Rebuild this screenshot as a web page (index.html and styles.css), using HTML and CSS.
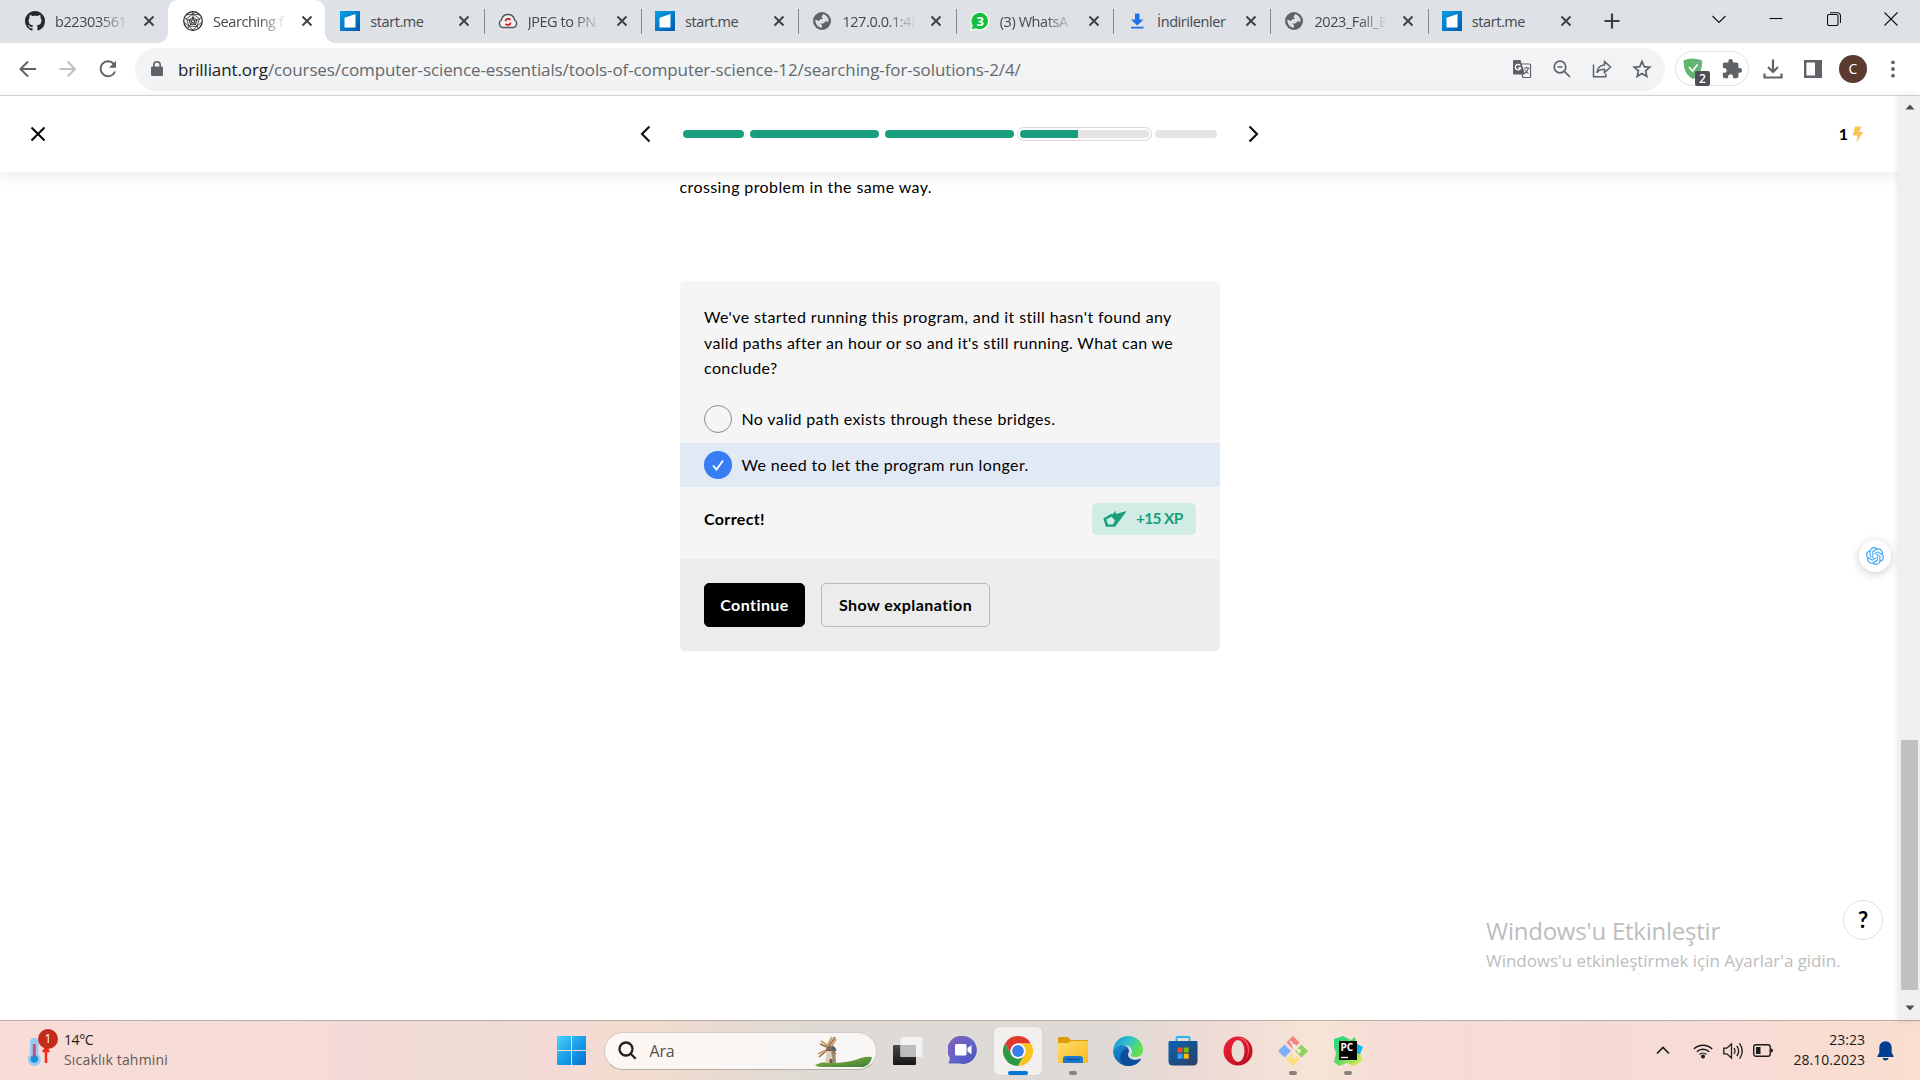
FILE: index.html
```html
<!DOCTYPE html>
<html lang="tr">
<head>
<meta charset="utf-8">
<title>Searching for Solutions</title>
<link rel="stylesheet" href="styles.css">
</head>
<body>
<svg width="0" height="0" class="defs">
  <defs>
    <linearGradient id="gStart" x1="0" y1="0" x2="1" y2="1"><stop offset="0" stop-color="#05a0e4"/><stop offset="1" stop-color="#0257ae"/></linearGradient>
    <linearGradient id="gWin" x1="0" y1="0" x2="1" y2="1"><stop offset="0" stop-color="#4ad2fb"/><stop offset=".5" stop-color="#1c9ee8"/><stop offset="1" stop-color="#0571d0"/></linearGradient>
    <linearGradient id="gHill" x1="0" y1="0" x2="1" y2="1"><stop offset="0" stop-color="#8ab83c"/><stop offset="1" stop-color="#3f7d3a"/></linearGradient>
    <linearGradient id="gDark" x1="0" y1="0" x2="0" y2="1"><stop offset="0" stop-color="#4b4a48"/><stop offset="1" stop-color="#161616"/></linearGradient>
    <linearGradient id="gChat" x1="0" y1="0" x2="1" y2="1"><stop offset="0" stop-color="#8a5fb0"/><stop offset=".5" stop-color="#6264c9"/><stop offset="1" stop-color="#4b53bc"/></linearGradient>
    <linearGradient id="gFold" x1="0" y1="0" x2="1" y2="1"><stop offset="0" stop-color="#ffdc6a"/><stop offset="1" stop-color="#f8b91f"/></linearGradient>
    <linearGradient id="gEdgeTop" x1="0" y1="0" x2="1" y2=".4"><stop offset="0" stop-color="#1f8fd0"/><stop offset=".5" stop-color="#2dbfd0"/><stop offset="1" stop-color="#63e04c"/></linearGradient>
    <linearGradient id="gEdge" x1="0" y1="0" x2="1" y2="1"><stop offset="0" stop-color="#1c8fdc"/><stop offset="1" stop-color="#0c4a92"/></linearGradient>
    <linearGradient id="gStore" x1="0" y1="0" x2="1" y2="1"><stop offset="0" stop-color="#0b62b4"/><stop offset="1" stop-color="#2b3d63"/></linearGradient>
    <linearGradient id="gOpera" x1="0" y1="0" x2="1" y2="1"><stop offset="0" stop-color="#f0243a"/><stop offset="1" stop-color="#b50a20"/></linearGradient>
    <linearGradient id="gPy" x1="0" y1="0" x2="1" y2="1"><stop offset="0" stop-color="#1fd789"/><stop offset=".5" stop-color="#62d860"/><stop offset="1" stop-color="#f4f04a"/></linearGradient>
    <symbol id="close" viewBox="0 0 12 12"><path d="M1.500 1.500 10.500 10.500M10.500 1.500 1.500 10.500" stroke="#3c4043" stroke-width="1.900" fill="none"/></symbol>
    <symbol id="startme" viewBox="0 0 20 20"><path d="M0 0h20v20H0z" fill="url(#gStart)"/><path d="M4.500 6.800 15.500 3v13.500h-11z" fill="#fff"/></symbol>
    <symbol id="globe" viewBox="0 0 20 20"><circle cx="10" cy="10" r="9" fill="#5f6368"/><path d="M11 3.200 9.500 6 11 8H8.500L7 10 3.300 8.400C3.200 13 6 16.400 9.800 16.800l.2-2.300-1.500-2h4l.8-2.300 3.200.6C17.300 7.500 14.500 3.800 11 3.200z" fill="#dee1e6"/><path d="m11.500 12 2.500-1 1 2-2.500 2.500z" fill="#5f6368"/></symbol>
  </defs>
</svg>
<div class="screen">
  <div class="tabs">
    <div class="tab first"><svg class="fav" viewBox="0 0 16 16"><path fill="#24292f" d="M8 0C3.580 0 0 3.580 0 8c0 3.540 2.290 6.530 5.470 7.590.4.070.55-.17.55-.38 0-.19-.01-.82-.01-1.490-2.010.37-2.530-.49-2.690-.94-.09-.23-.48-.94-.82-1.130-.28-.15-.68-.52-.01-.53.63-.01 1.080.58 1.230.82.72 1.210 1.870.87 2.330.66.07-.52.28-.87.51-1.070-1.780-.2-3.640-.89-3.640-3.950 0-.87.31-1.590.82-2.150-.08-.2-.36-1.020.08-2.120 0 0 .67-.21 2.200.82.64-.18 1.320-.27 2-.27s1.360.09 2 .27c1.530-1.040 2.200-.82 2.200-.82.44 1.100.16 1.920.08 2.120.51.56.82 1.270.82 2.150 0 3.070-1.870 3.750-3.650 3.950.29.25.54.73.54 1.480 0 1.070-.01 1.930-.01 2.200 0 .21.15.46.55.38A8.010 8.010 0 0 0 16 8c0-4.420-3.580-8-8-8z"/></svg><span class="title fade">b22303561</span><svg class="x"><use href="#close"/></svg></div>
    <div class="tab active"><svg class="fav" viewBox="0 0 20 20" fill="none" stroke="#222" stroke-width=".8"><circle cx="10" cy="10" r="9.300" stroke-width="1.200"/><path d="m10 3 6.500 4.700-2.500 7.600H6L3.500 7.700zM10 3V.8m6.500 6.900 2.300-.8M14 15.300l1.500 2M6 15.300l-1.500 2M3.500 7.700l-2.300-.8M10 6l4 3-1.500 4.500h-5L6 9zM10 3v3m6.500 1.700L14 9m0 6.300-1.500-1.800M6 15.300l1.500-1.800M3.500 7.700 6 9M6 9l8 0-6.500 4.500L10 6l2.500 7.500zM3 4l7-1 7 1M1 11l5 4.300 4 3.900 4-3.900 5-4.300"/></svg><span class="title fade">Searching f</span><svg class="x"><use href="#close"/></svg></div>
    <div class="tab"><svg class="fav"><use href="#startme"/></svg><span class="title">start.me</span><svg class="x"><use href="#close"/></svg></div>
    <div class="tab sep"><svg class="fav" viewBox="0 0 20 20"><path d="M4.500 16.500A4.200 4.200 0 0 1 3.500 8.800C4.200 5.200 7 3.500 10 3.500s5.800 1.700 6.500 5.300a4.200 4.200 0 0 1-1 7.700z" fill="#f2f2f2" stroke="#555" stroke-width="1.400"/><path d="M7.500 10.300A2.700 2.700 0 0 1 12.400 9m.2 2.500a2.700 2.700 0 0 1-5 1.200" stroke="#d8232a" stroke-width="1.900" fill="none"/></svg><span class="title fade">JPEG to PN</span><svg class="x"><use href="#close"/></svg></div>
    <div class="tab sep"><svg class="fav"><use href="#startme"/></svg><span class="title">start.me</span><svg class="x"><use href="#close"/></svg></div>
    <div class="tab sep"><svg class="fav"><use href="#globe"/></svg><span class="title fade">127.0.0.1:48</span><svg class="x"><use href="#close"/></svg></div>
    <div class="tab sep"><svg class="fav" viewBox="0 0 20 20"><path d="M0 20 1.400 14.500A9.500 9.500 0 1 1 5.600 18.600z" fill="#f5fff5"/><path d="m1.800 18.200 1-3.800a8.200 8.200 0 1 1 3 2.800z" fill="#12bf3c"/><text x="10" y="14.800" font-size="13" font-weight="700" text-anchor="middle" fill="#fff" class="ui">3</text></svg><span class="title fade">(3) WhatsA</span><svg class="x"><use href="#close"/></svg></div>
    <div class="tab sep"><svg class="fav" viewBox="0 0 20 20"><path d="M8 2.500h4.500v6h4L10.200 14.500 4 8.500h4zM4 15.800h12.500v1.700H4z" fill="#1a73e8"/></svg><span class="title">İndirilenler</span><svg class="x"><use href="#close"/></svg></div>
    <div class="tab sep"><svg class="fav"><use href="#globe"/></svg><span class="title fade">2023_Fall_E</span><svg class="x"><use href="#close"/></svg></div>
    <div class="tab sep"><svg class="fav"><use href="#startme"/></svg><span class="title">start.me</span><svg class="x"><use href="#close"/></svg></div>
    <div class="newtab"><svg width="16" height="16" viewBox="0 0 16 16"><path d="M8 .5v15M.5 8h15" stroke="#3c4043" stroke-width="2.200"/></svg></div>
    <div class="winctl">
      <svg width="14" height="14" viewBox="0 0 14 14"><path d="m.5 4 6.500 6.500L13.500 4"/></svg>
      <svg width="14" height="14" viewBox="0 0 14 14"><path d="M.5 6.500h13"/></svg>
      <svg width="14" height="14" viewBox="0 0 14 14"><rect x=".5" y="2.500" width="10.500" height="11" rx="1.500"/><path d="M3 .8h7.500a3 3 0 0 1 3 3V11"/></svg>
      <svg width="14" height="14" viewBox="0 0 14 14"><path d="m.5.500 13 13M13.500.500l-13 13"/></svg>
    </div>
  </div>

  <div class="toolbar">
    <div class="nav">
      <svg width="20" height="20" viewBox="0 0 20 20" stroke="#5f6368"><path d="M18 10H3M10 2.500 2.500 10l7.500 7.500"/></svg>
      <svg width="20" height="20" viewBox="0 0 20 20" stroke="#bdc1c6"><path d="M1.500 10H16.500M9.500 2.500l7.500 7.500-7.500 7.500"/></svg>
      <svg width="20" height="20" viewBox="0 0 20 20" stroke="#5f6368"><path d="M15.800 5A7.500 7.500 0 1 0 17 12.500"/><path d="M18 1.800v7h-7z" fill="#5f6368" stroke="none"/></svg>
    </div>
    <div class="omnibox">
      <svg width="12" height="16" viewBox="0 0 12 16"><rect y="5.500" width="12" height="9.500" rx="1.300" fill="#5f6368"/><path d="M2.800 6V4a3.200 3.200 0 0 1 6.400 0v2" fill="none" stroke="#5f6368" stroke-width="1.600"/></svg>
      <span class="url"><b>brilliant.org</b>/courses/computer-science-essentials/tools-of-computer-science-12/searching-for-solutions-2/4/</span>
      <div class="acts">
        <svg width="20" height="20" viewBox="0 0 20 20"><path d="M7 5h10.500q1 0 1 1v11.500q0 1-1 1H11z" fill="#fff" stroke="#5f6368" stroke-width="1.200"/><path d="M2 1h6.500l4.500 14.500H2q-1 0-1-1V2q0-1 1-1z" fill="#5f6368"/><path d="M8.200 6.500a2.700 2.700 0 1 0 .4 2.500H6.300" fill="none" stroke="#fff" stroke-width="1.300"/><path d="M11.500 9h6M14.500 7.500V9m2 0q-1 3.500-4 5.500M12.500 10.500l4 4.500" fill="none" stroke="#5f6368" stroke-width="1.100"/></svg>
        <svg width="20" height="20" viewBox="0 0 20 20" fill="none" stroke="#5f6368" stroke-width="1.700"><circle cx="8" cy="8" r="5.800"/><path d="m12.300 12.300 5.700 5.700M5.500 8h5"/></svg>
        <svg width="20" height="20" viewBox="0 0 20 20" fill="none" stroke="#5f6368" stroke-width="1.500"><path d="M1.500 5.500v12.300h12.300v-3M12.500 2.500l6 5.500-6 5.500v-3.200c-3.500 0-6 .8-7.500 3.500.3-4.800 3-7.500 7.500-7.800z"/></svg>
        <svg width="20" height="20" viewBox="0 0 20 20" fill="none" stroke="#5f6368" stroke-width="1.700"><path d="m10 2.500 2.200 5.200 5.600.5-4.200 3.700 1.200 5.500L10 14.500l-4.800 2.900 1.200-5.500-4.200-3.700 5.600-.5z"/></svg>
      </div>
    </div>
    <div class="pill">
      <div class="shield"><svg width="20" height="22" viewBox="0 0 20 22"><path d="M10 .8c3 0 6.500.6 9.200 1.800 0 8-1.700 14-9.200 18.400C2.500 16.600.8 10.600.8 2.600 3.500 1.400 7 .8 10 .8z" fill="#67b279"/><path d="M10 .8v20.200C2.500 16.600.8 10.600.8 2.600 3.500 1.400 7 .8 10 .8z" fill="#5fb56c"/><path d="m6 9 3.500 4L14.500 6.500" fill="none" stroke="#fff" stroke-width="1.700"/></svg><span class="count">2</span></div>
      <svg width="22" height="22" viewBox="0 0 24 24"><path fill="#5f6368" d="M20.500 11H19V7c0-1.100-.9-2-2-2h-4V3.500a2.500 2.500 0 0 0-5 0V5H4c-1.100 0-1.990.9-1.990 2v3.800H3.500c1.490 0 2.700 1.210 2.700 2.700s-1.210 2.700-2.700 2.700H2V20c0 1.100.9 2 2 2h3.800v-1.500c0-1.490 1.210-2.700 2.700-2.700s2.700 1.210 2.700 2.700V22H17c1.100 0 2-.9 2-2v-4h1.500a2.500 2.500 0 0 0 0-5z"/></svg>
    </div>
    <div class="right">
      <div><svg width="20" height="20" viewBox="0 0 20 20" fill="none" stroke="#5f6368" stroke-width="2.200"><path d="M10 .5V13M5 8l5 5 5-5M1.500 14.500v4h17v-4"/></svg></div>
      <div><svg width="18" height="18" viewBox="0 0 18 18"><path d="M1.200 1.200h15.600v15.600H1.200z" fill="none" stroke="#5f6368" stroke-width="2.400"/><path d="M11 1h6v16h-6z" fill="#5f6368"/></svg></div>
      <div><span class="avatar">C</span></div>
      <div><svg width="4" height="18" viewBox="0 0 4 18" fill="#5f6368"><circle cx="2" cy="2.300" r="1.900"/><circle cx="2" cy="9" r="1.900"/><circle cx="2" cy="15.700" r="1.900"/></svg></div>
    </div>
  </div>

  <div class="viewport">
    <main class="page">
      <header class="lesson">
        <svg width="16" height="16" viewBox="0 0 16 16"><path d="m1.500 1.500 13 13M14.500 1.500l-13 13" stroke="#000" stroke-width="2"/></svg>
        <div class="progress">
          <svg width="11" height="18" viewBox="0 0 11 18"><path d="M9.500 1.500 2 9l7.500 7.500" fill="none" stroke="#111" stroke-width="2.200"/></svg>
          <div class="segs">
            <i class="seg short done"></i><i class="seg done"></i><i class="seg done"></i><i class="seg current"><i class="part"></i></i><i class="seg last"></i>
          </div>
          <svg width="11" height="18" viewBox="0 0 11 18"><path d="M1.500 1.500 9 9l-7.500 7.500" fill="none" stroke="#111" stroke-width="2.200"/></svg>
        </div>
        <div class="streak"><span>1</span><svg width="12" height="17" viewBox="0 0 12 17"><path d="M3 .5h6L7.500 6H11.500L4.500 16.500 5.500 9.500H.8z" fill="#f9c45c"/></svg></div>
      </header>
      <article class="content">
        <p class="body">crossing problem in the same way.</p>
        <section class="card">
          <p class="question">We've started running this program, and it still hasn't found any<br><span class="tight">valid paths after an hour or so and it's still running. What can we</span><br>conclude?</p>
          <div class="option"><span class="radio"></span><span class="label">No valid path exists through these bridges.</span></div>
          <div class="option chosen"><span class="radio"><svg width="14" height="14" viewBox="0 0 14 14"><path d="m2 7.500 3.500 4L12 2.500" fill="none" stroke="#fff" stroke-width="1.800"/></svg></span><span class="label">We need to let the program run longer.</span></div>
          <div class="result"><strong>Correct!</strong>
            <span class="xp"><svg width="24" height="18" viewBox="0 0 24 18"><path fill="#189e7c" fill-rule="evenodd" d="M.3 8.500 8.500 3.500 8.800 5 12.500.7 13 4 23.700 1 12 16.800l-9 0zM3.200 9.500 5 14.500h5l2-4-3.500-3.700z"/></svg><b>+15 XP</b></span></div>
          <div class="actions"><button class="btn primary">Continue</button><button class="btn">Show explanation</button></div>
        </section>
      </article>
      <div class="gpt"><svg width="18" height="18" viewBox="0 0 24 24"><path fill="#3fa9f5" d="M22.282 9.821a5.985 5.985 0 0 0-.516-4.910 6.046 6.046 0 0 0-6.510-2.900A6.065 6.065 0 0 0 4.981 4.182a5.985 5.985 0 0 0-3.998 2.900 6.046 6.046 0 0 0 .743 7.097 5.980 5.980 0 0 0 .510 4.911 6.051 6.051 0 0 0 6.515 2.900A5.985 5.985 0 0 0 13.260 24a6.056 6.056 0 0 0 5.772-4.206 5.990 5.990 0 0 0 3.998-2.900 6.056 6.056 0 0 0-.748-7.073zM13.260 22.430a4.476 4.476 0 0 1-2.876-1.041l.142-.080 4.778-2.758a.795.795 0 0 0 .393-.681v-6.737l2.020 1.169a.071.071 0 0 1 .038.052v5.583a4.504 4.504 0 0 1-4.495 4.493zM3.600 18.304a4.471 4.471 0 0 1-.535-3.014l.142.085 4.783 2.759a.771.771 0 0 0 .780 0l5.843-3.369v2.332a.080.080 0 0 1-.033.062L9.740 19.950a4.500 4.500 0 0 1-6.140-1.646zM2.341 7.896a4.485 4.485 0 0 1 2.365-1.973V11.600a.766.766 0 0 0 .388.676l5.815 3.355-2.020 1.168a.076.076 0 0 1-.071 0L3.987 14.010A4.504 4.504 0 0 1 2.341 7.896zm16.596 3.856L13.104 8.364 15.120 7.200a.076.076 0 0 1 .071 0l4.830 2.791a4.494 4.494 0 0 1-.676 8.105v-5.678a.790.790 0 0 0-.408-.666zm2.011-3.023-.142-.085-4.774-2.782a.776.776 0 0 0-.785 0L9.409 9.230V6.897a.066.066 0 0 1 .028-.061l4.830-2.787a4.500 4.500 0 0 1 6.681 4.660zM8.307 12.863l-2.020-1.164a.080.080 0 0 1-.038-.057V6.074a4.500 4.500 0 0 1 7.376-3.453l-.142.080L8.704 5.460a.795.795 0 0 0-.393.681zm1.097-2.366L12.006 9l2.607 1.500v3L12.016 15l-2.607-1.500z"/></svg></div>
      <div class="help">?</div>
      <div class="watermark"><div class="w1">Windows'u Etkinleştir</div><div class="w2">Windows'u etkinleştirmek için Ayarlar'a gidin.</div></div>
    </main>
    <div class="scrollbar"><svg width="10" height="6" viewBox="0 0 10 6"><path d="M5 .5 9.500 5.500h-9z" fill="#505050"/></svg><i class="thumb"></i><svg width="10" height="6" viewBox="0 0 10 6"><path d="M5 5.500.5.500h9z" fill="#505050"/></svg></div>
  </div>

  <footer class="taskbar">
    <div class="weather">
      <div class="thermo"><svg width="22" height="30" viewBox="0 0 22 30"><path d="M2 4.500a4.300 4.300 0 0 1 8.500 0v13a6.500 6.500 0 1 1-8.500 0z" fill="#9acbf3"/><circle cx="6.300" cy="22" r="3.800" fill="#148fdc"/><path d="M6.300 7v13" stroke="#c8517b" stroke-width="3"/><path d="M18 10v16M15 15l3-4 3 4" stroke="#f3281b" stroke-width="2.500" fill="none"/></svg><span class="bubble">1</span></div>
      <div class="wtext"><div class="temp">14°C</div><div class="sub">Sıcaklık tahmini</div></div>
    </div>
    <div class="apps">
      <svg width="29" height="29" viewBox="0 0 29 29" fill="url(#gWin)"><path d="M1 0h13v14H0V1q0-1 1-1zM15 0h13q1 0 1 1v13H15zM0 15h14v14H1q-1 0-1-1zM15 15h14v13q0 1-1 1H15z"/></svg>
      <div class="search">
        <svg width="19" height="19" viewBox="0 0 19 19" fill="none" stroke="#222" stroke-width="2.300"><circle cx="8" cy="8" r="6.500"/><path d="m12.700 12.700 5 5"/></svg>
        <span>Ara</span>
        <svg class="mill" width="58" height="32" viewBox="0 0 58 32"><path d="M0 29q9-5 21-2 16-1 25-5 6-2 11-1-1 7-8 10H6q-4 0-6-2z" fill="url(#gHill)"/><path d="m12 14-2 13h11l-1-13z" fill="#d9cfb8"/><path d="m16 14 4 0 1 13h-3z" fill="#9c8e77"/><path d="M10.500 15q1-5.500 5.500-5.500t5.500 5.500z" fill="#53606a"/><path d="M14.500 23h3v4h-3z" fill="#7b5939"/><path d="m20 1-9 14-7 6M5 8l9 4 7 6" stroke="#9a6b43" stroke-width="1.500" fill="none"/><path d="m17 1-4 8M21 3l-5 8M6 5l7 5M3 18l8-4" stroke="#c99a68" stroke-width="1.800"/></svg>
      </div>
      <div class="app"><svg width="30" height="28" viewBox="0 0 30 28"><rect y="8" width="23" height="20" rx="1" fill="url(#gDark)"/><rect x="7.500" width="22" height="20" rx="1" fill="#f4f4f4" opacity=".92"/><path d="M7.500 8H23v12H8.500q-1 0-1-1z" fill="#bdbdbb"/></svg></div>
      <div class="app"><svg width="30" height="29" viewBox="0 0 30 29"><path d="M15 0a14 14 0 1 1-3.500 27.600H1.500q-1.300 0-.7-1.200L2 22A14 14 0 0 1 15 0z" fill="url(#gChat)"/><rect x="7" y="8" width="11.500" height="11.500" rx="1.500" fill="#fff"/><path d="m19.500 12 4-2.700v9l-4-2.700z" fill="#fff"/></svg></div>
      <div class="app on"><svg width="30" height="30" viewBox="0 0 30 30"><circle cx="15" cy="15" r="15" fill="#fff"/><path d="M2 7.500A15 15 0 0 1 28 7.500H15A7.500 7.500 0 0 0 8.500 18.700z" fill="#e0382d"/><path d="M2 7.500 8.500 18.750A7.500 7.500 0 0 0 21.500 18.750L15 30A15 15 0 0 1 2 7.500z" fill="#2c9947"/><path d="M28 7.500H15a7.500 7.500 0 0 1 6.500 11.250L15 30A15 15 0 0 0 28 7.500z" fill="#fcc31e"/><circle cx="15" cy="15" r="7.500" fill="#fff"/><circle cx="15" cy="15" r="5.900" fill="#3b7ded"/></svg><i></i></div>
      <div class="app run"><svg width="30" height="27" viewBox="0 0 30 27"><path d="M0 1q0-1 1-1h9l3 3h16q1 0 1 1v6H0z" fill="#dd9c0a"/><path d="M0 6h10l3-2h16q1 0 1 1v20q0 1-1 1H1q-1 0-1-1z" fill="url(#gFold)"/><path d="M5 26v-4q0-3 3-3h14q3 0 3 3v4z" fill="#1d78cd"/><path d="M8.500 22.500h13" stroke="#0b4e93" stroke-width="1.200"/></svg><i></i></div>
      <div class="app"><svg width="30" height="30" viewBox="0 0 30 30"><path d="M0 15a15 15 0 0 0 22 13.200c3-1.500 5.500-4 6-6-6 3.500-14 .5-14-5 0-3 1.500-4.200 1.500-4.200C14 8 3 7 0 15z" fill="url(#gEdge)"/><path d="M10 29c-5-5-3-14 3.500-16.500 2 0 3 2 2.500 3.500-2 2-1.500 9 8 8 1.500-.2 3.500-1.300 4-1C25 29 17 31.500 10 29z" fill="#0d4e9c"/><path d="M0 14.500C1 5 8 0 15 0c9 0 15 6.500 15 13.500 0 5-3.500 7.500-7.500 7.500-3 0-5-1-4.500-2 3-4 0-10-7.500-10C5.500 9 1.500 11 0 14.500z" fill="url(#gEdgeTop)"/></svg></div>
      <div class="app"><svg width="30" height="30" viewBox="0 0 30 30"><path d="M8.500 6V2q0-1 1-1h11q1 0 1 1v4" fill="none" stroke="#25b5f1" stroke-width="1.800"/><path d="M.5 6q0-1 1-1h27q1 0 1 1v19q0 4.500-4.500 4.500H5Q.5 29.500.5 25z" fill="url(#gStore)"/><path d="M9.500 11.500h5v5h-5z" fill="#f25022"/><path d="M15.700 11.500h5v5h-5z" fill="#7fba00"/><path d="M9.500 17.700h5v5h-5z" fill="#2aa6f0"/><path d="M15.700 17.700h5v5h-5z" fill="#ffb900"/></svg></div>
      <div class="app"><svg width="30" height="30" viewBox="0 0 30 30"><circle cx="15" cy="15" r="14.500" fill="url(#gOpera)"/><path d="M15 2q10 2 10 13T15 28a14.500 14.500 0 0 0 5-26z" fill="#f75a5a"/><ellipse cx="15" cy="15" rx="6.500" ry="11" fill="#ecdcd6"/></svg></div>
      <div class="app run"><svg width="30" height="30" viewBox="0 0 30 30"><path d="m15 0 6.500 6.500L15 13 8.500 6.500z" fill="#f58080"/><path d="m23.500 8.500 6.500 6.500-6.500 6.500L17 15z" fill="#8fd35c"/><path d="m15 17 6.500 6.500L15 30l-6.500-6.500z" fill="#fbe07d"/><path d="M6.500 8.500 13 15l-6.500 6.500L0 15z" fill="#7fb0fb"/><path d="M12 5l4 5v10M16 11l5 4" stroke="#f8e8dd" stroke-width="1.800" fill="none"/><circle cx="16" cy="10" r="2" fill="#f8e8dd"/><circle cx="21" cy="15" r="2" fill="#f8e8dd"/><circle cx="16" cy="20.500" r="2" fill="#f8e8dd"/></svg><i></i></div>
      <div class="app run"><svg width="30" height="30" viewBox="0 0 30 30"><path d="m1 3 9-3 8 4 4-3 2 8 6 2-3 6 2 8-8 5-7-3-8 3-5-4 2-9-2-6z" fill="url(#gPy)"/><path d="m24 8 6 3-3 7-3-1z" fill="#0cb6f0"/><path d="M6 5h18v19H6z" fill="#050505"/><text x="7.500" y="15" font-size="10" font-weight="700" fill="#fff" class="ui">PC</text><path d="M8 21.500h7" stroke="#fff" stroke-width="1.300"/></svg><i></i></div>
    </div>
    <div class="tray">
      <svg width="14" height="9" viewBox="0 0 14 9"><path d="m1 7.500 6-6 6 6" fill="none" stroke="#1b1b1b" stroke-width="1.700"/></svg>
      <svg class="wifi" width="20" height="16" viewBox="0 0 20 16" fill="none" stroke="#1b1b1b" stroke-width="1.400"><path d="M.8 6a13 13 0 0 1 18.400 0M3.800 8.800a8.800 8.800 0 0 1 12.400 0M6.600 11.500a4.900 4.900 0 0 1 6.800 0"/><circle cx="10" cy="13.500" r="1.300" fill="#1b1b1b"/></svg>
      <svg width="21" height="18" viewBox="0 0 21 18" fill="none" stroke="#1b1b1b" stroke-width="1.300"><path d="M.8 6.200h3L8.500 2v14l-4.700-4.200h-3zM11 6.200q2 2.800 0 5.600M13.800 3.800q3.700 5.200 0 10.400M16.500 1.300q5.500 7.700 0 15.400"/></svg>
      <svg class="battery" width="20" height="13" viewBox="0 0 20 13"><rect x=".7" y=".7" width="16.500" height="11.500" rx="2.200" fill="none" stroke="#1b1b1b" stroke-width="1.400"/><path d="M3 3h4.500v7H3zM18 4.500q2 0 2 2t-2 2z" fill="#1b1b1b"/></svg>
      <div class="clock"><div>23:23</div><div>28.10.2023</div></div>
      <svg width="17" height="20" viewBox="0 0 17 20"><path d="M8.500.3c4 0 6.200 3 6.200 6.500v5l2 3.500q0 .7-.7.700H1q-.7 0-.7-.7l2-3.500v-5C2.300 3.300 4.500.3 8.500.3zM5.500 17h6q-.6 2.500-3 2.500t-3-2.500z" fill="#003e92"/></svg>
    </div>
  </footer>
</div>
</body>
</html>
```
FILE: styles.css
```css
* { box-sizing: border-box; }
body { margin: 0; background: #fff; overflow: hidden; }
svg { display: block; flex: none; }
.defs { position: absolute; }
.ui, .screen { font-family: "Open Sans", "Noto Sans", sans-serif; }
.screen { width: 1920px; height: 1080px; display: flex; flex-direction: column; }

/* Tab strip */
.tabs { height: 43px; flex: none; background: #dee1e6; display: flex; }
.tab { width: 157.35px; flex: none; display: flex; align-items: center; padding-left: 15px; position: relative; font-size: 14.5px; letter-spacing: -.42px; color: #45494d; padding-bottom: 1px; }
.tab.first { width: 168px; padding-left: 25px; }
.tab.active { background: #fff; border-radius: 10px 10px 0 0; }
.tab.active::before, .tab.active::after { content: ""; position: absolute; bottom: 0; width: 10px; height: 10px; }
.tab.active::before { left: -10px; background: radial-gradient(circle at 0 0, transparent 9.500px, #fff 10px); }
.tab.active::after { right: -10px; background: radial-gradient(circle at 100% 0, transparent 9.500px, #fff 10px); }
.tab.sep::before { content: ""; position: absolute; left: 1px; top: 9px; width: 1px; height: 25px; background: #85898e; }
.fav { width: 20px; height: 20px; }
.title { width: 79px; margin: 0 -6px 0 10px; overflow: hidden; white-space: nowrap; }
.fade { -webkit-mask-image: linear-gradient(90deg, #000 45px, transparent 74px); mask-image: linear-gradient(90deg, #000 45px, transparent 74px); }
.x { width: 12px; height: 12px; margin-left: 15px; }
.newtab { width: 55px; display: flex; align-items: center; justify-content: center; padding-bottom: 1px; }
.winctl { margin-left: auto; display: flex; gap: 43.300px; padding: 12px 22px 0 0; }
.winctl svg { fill: none; stroke: #111; stroke-width: 1.100; }

/* Toolbar */
.toolbar { height: 53px; flex: none; background: #fff; border-bottom: 1px solid #d5d7da; display: flex; align-items: center; padding-bottom: 1px; }
.nav { width: 135px; display: flex; gap: 20px; padding-left: 18px; }
.nav svg { fill: none; stroke-width: 2; }
.omnibox { width: 1530px; height: 43px; margin-top: 1px; border-radius: 22px; background: #f1f3f4; display: flex; align-items: center; padding: 0 3px 0 16px; }
.url { margin-left: 15px; font-size: 17px; letter-spacing: -.107px; color: #65696e; white-space: nowrap; }
.url b { font-weight: 400; color: #202124; }
.acts { margin-left: auto; display: flex; gap: 20px; padding-right: 10px; }
.pill { width: 74px; height: 35px; margin-left: 10px; border: 1px solid #dfe1e5; border-radius: 18px; display: flex; align-items: center; padding: 0 5px 0 7px; justify-content: space-between; }
.shield { position: relative; }
.count { position: absolute; left: 12px; top: 13px; width: 15px; height: 15px; border-radius: 2px; background: #4c4f53; color: #fff; font-size: 12px; font-weight: 600; line-height: 15px; text-align: center; }
.right { display: flex; margin-left: 4px; }
.right div { width: 40px; height: 30px; display: flex; align-items: center; justify-content: center; }
.avatar { width: 28px; height: 28px; border-radius: 50%; background: #5b3a30; color: #fff; font-size: 14px; line-height: 28px; text-align: center; }

/* Page */
.viewport { flex: 1; display: flex; min-height: 0; }
.page { width: 1899px; position: relative; font-family: Lato, "Open Sans", sans-serif; color: #000; }
.lesson { height: 76px; display: flex; align-items: center; padding: 0 35px 0 30px; box-shadow: 0 3px 14px rgba(0,0,0,.09); position: relative; }
.progress { margin-left: 594px; display: flex; align-items: center; gap: 32px; }
.segs { display: flex; gap: 6px; width: 533px; }
.seg { display: block; flex: none; width: 129px; height: 8px; border-radius: 4px; background: #e4e4e4; }
.short { width: 61px; }
.last { width: 62px; }
.seg.done { background: #189e7c; }
.current { box-shadow: 0 0 0 2px #fff, 0 0 0 3px #d9d9d9; }
.part { display: block; width: 58px; height: 8px; border-radius: 4px 0 0 4px; background: #189e7c; }
.streak { margin-left: auto; display: flex; align-items: center; gap: 4px; font: 700 16px Lato, sans-serif; }
.streak span { margin-top: -2px; }
.content { width: 540px; margin-left: 680px; }
p { margin: 0; }
.body { height: 109px; padding-top: 2px; font-size: 16px; line-height: 25.500px; letter-spacing: .4px; margin-left: -.5px; }
.card { height: 370px; border-radius: 5px; background: #f5f5f5; overflow: hidden; font-size: 16px; letter-spacing: .37px; display: flex; flex-direction: column; }
.question { height: 116px; padding: 23px 24px 0; line-height: 25.500px; letter-spacing: .386px; white-space: nowrap; }
.tight { letter-spacing: .314px; }
.option { height: 44px; padding: 0 24px; display: flex; align-items: center; gap: 9.500px; margin-bottom: 2px; }
.label { padding-bottom: 2px; }
.chosen { background: #e1e9f5; margin-bottom: 0; }
.radio { width: 28px; height: 28px; border: 1px solid #8c8c8c; border-radius: 50%; display: flex; align-items: center; justify-content: center; }
.chosen .radio { background: #377df6; border: 0; }
.result { height: 72px; padding: 0 24px 8px; display: flex; align-items: center; justify-content: space-between; }
.result strong { font-weight: 700; padding-bottom: 2px; }
.xp { width: 104px; height: 32px; border-radius: 5px; background: #d1ece4; color: #189e7c; display: flex; align-items: center; padding-left: 11px; gap: 9px; }
.xp b { font-size: 15.5px; letter-spacing: -.7px; padding-bottom: 2px; }
.actions { flex: 1; background: #ececec; padding: 24px; display: flex; gap: 16px; }
.btn { height: 44px; width: 169px; padding: 0 0 2px; border: 1px solid #b8b8b8; border-radius: 5px; background: transparent; font: 700 16px Lato, sans-serif; letter-spacing: .43px; color: #000; }
.primary { width: 101px; background: #000; border-color: #000; color: #fff; }
.gpt { position: absolute; left: 1859px; top: 444px; width: 32px; height: 32px; border-radius: 50%; background: #fff; box-shadow: 0 2px 10px rgba(0,0,0,.2); display: flex; align-items: center; justify-content: center; }
.help { position: absolute; left: 1843px; top: 804px; width: 40px; height: 40px; border: 1px solid #e2e2e2; border-radius: 50%; font: 700 22px/38px Lato, sans-serif; text-align: center; }
.watermark { position: absolute; left: 1486px; top: 818px; color: #bdbdbd; font-family: "Open Sans", sans-serif; white-space: nowrap; }
.w1 { font-size: 24px; line-height: 34px; letter-spacing: -.237px; }
.w2 { font-size: 17px; line-height: 26px; letter-spacing: -.046px; }
.scrollbar { width: 21px; position: relative; background: #f0f0f0; box-shadow: -1px 0 7px rgba(0,0,0,.12); display: flex; flex-direction: column; align-items: center; padding: 8px 0 9px; }
.thumb { width: 17px; height: 250px; margin: auto 0 15px; background: #c1c1c1; }

/* Taskbar */
.taskbar { height: 60px; flex: none; border-top: 1px solid #b9aca7; display: flex; align-items: center; font-size: 14px; color: #1b1b1b;
  background: linear-gradient(90deg, #f8dcd5 0, #f7dcd6 270px, #f5dad7 340px, #efddd3 460px, #eedcd3 500px, #f4dad6 550px, #f4dcd0 630px, #e9dad0 720px, #e0dad5 800px, #dedad6 950px, #dfdad6 1110px, #ebdad5 1190px, #f7e4d7 1310px, #f6dcd5 1400px, #f6dad6 1600px, #f8dcd4 1780px, #fadecf 1920px); }
.weather { width: 557px; display: flex; padding-left: 28px; gap: 14px; }
.thermo { position: relative; padding-top: 5px; }
.bubble { position: absolute; left: 10px; top: -3px; width: 20px; height: 20px; border-radius: 50%; background: #c42b1c; color: #fff; font-size: 12px; line-height: 20px; text-align: center; }
.wtext { line-height: 20px; white-space: nowrap; margin-top: -2px; }
.temp { letter-spacing: -.4px; }
.sub { color: #625854; letter-spacing: .18px; }
.apps { display: flex; align-items: center; }
.search { width: 273px; height: 38px; margin: 0 4.500px 0 17.500px; border-radius: 19px; background: rgba(255,255,255,.75); border: 1px solid #d5c9c3; border-bottom-color: #b5aca8; display: flex; align-items: center; padding-left: 13px; font-size: 16px; color: #55504e; }
.search span { margin-left: 13px; letter-spacing: -.18px; }
.mill { margin-left: auto; margin-right: 3px; margin-top: 2px; }
.app { width: 48px; height: 48px; margin-right: 7px; display: flex; align-items: center; justify-content: center; position: relative; border-radius: 5px; }
.search + .app { margin-left: 3px; }
.on { background: rgba(255,255,255,.6); box-shadow: 0 0 1px rgba(0,0,0,.3); }
.app i { position: absolute; bottom: 0; left: 20px; width: 8px; height: 4px; border-radius: 2px; background: #8b827d; }
.on i { left: 14px; width: 20px; background: #0078d4; }
.tray { margin-left: auto; display: flex; align-items: center; padding-right: 26.500px; }
.wifi { margin: 0 10px 0 23px; }
.battery { margin-left: 9px; }
.clock { width: 80px; margin: -2px 11.500px 0 12px; text-align: right; line-height: 20px; white-space: nowrap; }
```
